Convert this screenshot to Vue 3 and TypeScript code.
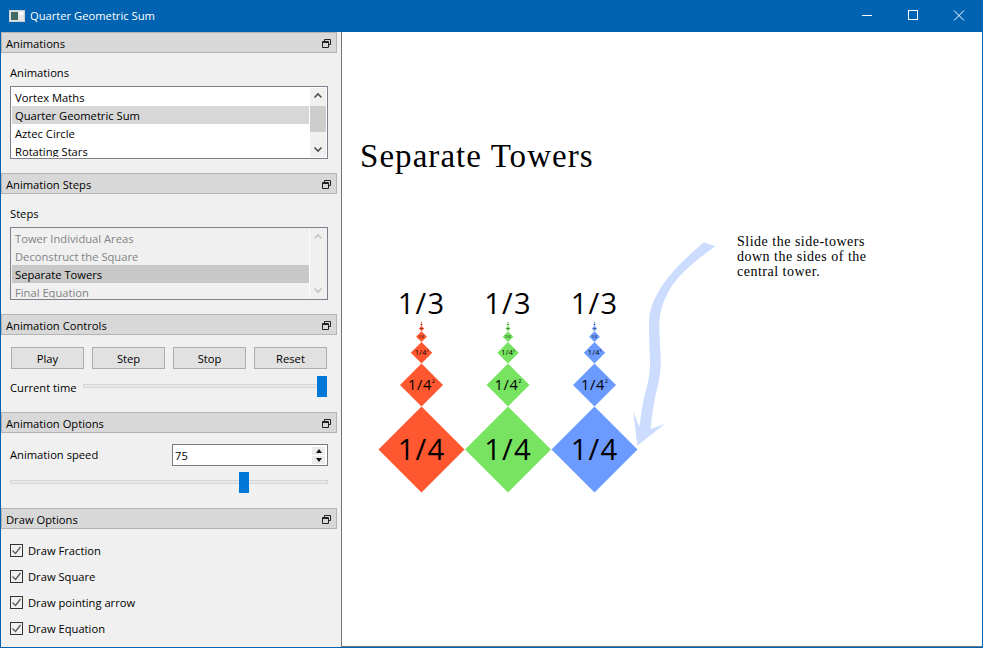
<template>
  <div class="window">
    <header class="titlebar">
      <svg class="app-icon" width="16" height="12" viewBox="0 0 16 12">
        <rect x="0.5" y="0.5" width="15" height="11" fill="#e6e6e6" stroke="#d0d0d0" />
        <rect x="2" y="2" width="7" height="8" fill="#3f6a68" />
        <rect x="10" y="2" width="4" height="3" fill="#fff" />
      </svg>
      <span class="title">Quarter Geometric Sum</span>
      <div class="win-controls">
        <svg width="46" height="31" viewBox="0 0 46 31"><path d="M18 15.5h10" stroke="#fff" fill="none" /></svg>
        <svg width="46" height="31" viewBox="0 0 46 31"><rect x="18.5" y="10.5" width="9" height="9" stroke="#fff" fill="none" /></svg>
        <svg width="46" height="31" viewBox="0 0 46 31"><path d="M18 10.5l10 10M28 10.5l-10 10" stroke="#fff" fill="none" /></svg>
      </div>
    </header>

    <main class="main">
      <aside class="sidebar">
        <section class="dock">
          <h2 class="dock-head">Animations<svg class="float" width="9" height="9" viewBox="0 0 9 9"><path d="M2.5 2.5v-2h6v5h-2M.5 2.5h6v6h-6zM.5 3.5h6" fill="none" stroke="#222" /></svg></h2>
          <div class="dock-body body-animations">
            <div class="label">Animations</div>
            <div class="list">
              <ul class="rows">
                <li v-for="a in animations" :key="a" class="row" :class="{ selected: a === 'Quarter Geometric Sum' }">{{ a }}</li>
              </ul>
              <div class="scrollbar">
                <svg width="16" height="16" viewBox="0 0 16 16"><path d="M4.5 9.5L8 6l3.5 3.5" fill="none" stroke="#505050" stroke-width="1.6" /></svg>
                <div class="track"><div class="thumb"></div></div>
                <svg width="16" height="16" viewBox="0 0 16 16"><path d="M4.5 6.5L8 10l3.5-3.5" fill="none" stroke="#505050" stroke-width="1.6" /></svg>
              </div>
            </div>
          </div>
        </section>

        <section class="dock">
          <h2 class="dock-head">Animation Steps<svg class="float" width="9" height="9" viewBox="0 0 9 9"><path d="M2.5 2.5v-2h6v5h-2M.5 2.5h6v6h-6zM.5 3.5h6" fill="none" stroke="#222" /></svg></h2>
          <div class="dock-body body-steps">
            <div class="label">Steps</div>
            <div class="list disabled">
              <ul class="rows">
                <li v-for="s in steps" :key="s" class="row" :class="{ selected: s === 'Separate Towers' }">{{ s }}</li>
              </ul>
              <div class="scrollbar">
                <svg width="16" height="16" viewBox="0 0 16 16"><path d="M4.5 9.5L8 6l3.5 3.5" fill="none" stroke="#c4c4c4" stroke-width="1.6" /></svg>
                <div class="track"></div>
                <svg width="16" height="16" viewBox="0 0 16 16"><path d="M4.5 6.5L8 10l3.5-3.5" fill="none" stroke="#c4c4c4" stroke-width="1.6" /></svg>
              </div>
            </div>
          </div>
        </section>

        <section class="dock">
          <h2 class="dock-head">Animation Controls<svg class="float" width="9" height="9" viewBox="0 0 9 9"><path d="M2.5 2.5v-2h6v5h-2M.5 2.5h6v6h-6zM.5 3.5h6" fill="none" stroke="#222" /></svg></h2>
          <div class="dock-body body-controls">
            <div class="buttons">
              <button v-for="b in buttons" :key="b" class="btn">{{ b }}</button>
            </div>
            <div class="time-row">
              <span class="label time-label">Current time</span>
              <div class="slider time-slider"><div class="handle" :style="{ left: '233px' }"></div></div>
            </div>
          </div>
        </section>

        <section class="dock">
          <h2 class="dock-head">Animation Options<svg class="float" width="9" height="9" viewBox="0 0 9 9"><path d="M2.5 2.5v-2h6v5h-2M.5 2.5h6v6h-6zM.5 3.5h6" fill="none" stroke="#222" /></svg></h2>
          <div class="dock-body body-options">
            <div class="speed-row">
              <span class="label">Animation speed</span>
              <div class="spin">
                <span class="spin-value">75</span>
                <div class="spin-btns">
                  <div class="spin-btn"><i class="tri up"></i></div>
                  <div class="spin-btn"><i class="tri down"></i></div>
                </div>
              </div>
            </div>
            <div class="slider speed-slider"><div class="handle" :style="{ left: '228px' }"></div></div>
          </div>
        </section>

        <section class="dock">
          <h2 class="dock-head">Draw Options<svg class="float" width="9" height="9" viewBox="0 0 9 9"><path d="M2.5 2.5v-2h6v5h-2M.5 2.5h6v6h-6zM.5 3.5h6" fill="none" stroke="#222" /></svg></h2>
          <div class="dock-body body-draw">
            <label v-for="c in checks" :key="c" class="check">
              <svg width="13" height="13" viewBox="0 0 13 13">
                <rect x="0.5" y="0.5" width="12" height="12" fill="#f0f0f0" stroke="#333" />
                <path d="M2.5 6.5l3 3 5-6.5" fill="none" stroke="#5a5a5a" stroke-width="1.3" />
              </svg>
              <span>{{ c }}</span>
            </label>
          </div>
        </section>
      </aside>

      <div class="canvas">
        <svg class="scene" width="640" height="616" viewBox="342 32 640 616">
          <text x="360" y="167" class="scene-title">Separate Towers</text>

          <path
            class="arrow"
            d="M704 242.3L715.3 246.3C690 264 675 279 668.3 292C662 304 659.3 314 659.3 325C659.3 340 661 352 660.7 365C660.5 378 657 388 655 398C653 408 651.5 418 650.7 429L665 423.7L637.3 445.7L633.3 411.7L639.3 427C640.5 418 642 408 644 398C647 386 650 376 650 365C650 352 649 340 649 325C649 312 652 303 658.3 292C667 276 685 258 704 242.3Z"
          />
          <text class="note"><tspan x="737" y="246">Slide the side-towers</tspan><tspan x="737" y="261">down the sides of the</tspan><tspan x="737" y="276">central tower.</tspan></text>

          <g v-for="t in towers" :key="t.color">
            <text :x="t.x" y="314" class="frac top">1/3</text>
            <g v-for="(d, i) in levels" :key="i">
              <polygon
                :points="`${t.x},${d.y - d.half} ${t.x + d.half},${d.y} ${t.x},${d.y + d.half} ${t.x - d.half},${d.y}`"
                :fill="t.color"
              />
              <text v-if="i < 4" :x="t.x" :y="d.y + d.half * 0.25" class="frac" :style="{ fontSize: d.half * 0.68 + 'px' }">1/4<tspan v-if="i > 0" class="sup" :dy="-d.half * 0.32">{{ i + 1 }}</tspan></text>
              <rect v-else :x="t.x - d.half * 0.4" :y="d.y - 0.4" :width="d.half * 0.8" height="0.8" fill="#3a3a3a" />
            </g>
          </g>
        </svg>
      </div>
    </main>
  </div>
</template>

<script setup lang="ts">
const animations = ['Vortex Maths', 'Quarter Geometric Sum', 'Aztec Circle', 'Rotating Stars'];
const steps = ['Tower Individual Areas', 'Deconstruct the Square', 'Separate Towers', 'Final Equation'];
const buttons = ['Play', 'Step', 'Stop', 'Reset'];
const checks = ['Draw Fraction', 'Draw Square', 'Draw pointing arrow', 'Draw Equation'];

const towers = [
  { x: 421.5, color: '#ff5730' },
  { x: 508, color: '#77e360' },
  { x: 594.5, color: '#6c9bff' }
];

// each level is half the size of the one below it
const levels: { y: number; half: number }[] = [];
let half = 43;
let y = 449.5;
for (let i = 0; i < 7; i++) {
  levels.push({ y, half });
  y -= half * 1.5;
  half /= 2;
}
</script>

<style>
html,
body {
  margin: 0;
  background: #0063b1;
}
</style>

<style scoped>
.window {
  width: 983px;
  height: 648px;
  box-sizing: border-box;
  display: flex;
  flex-direction: column;
  background: #0063b1;
  padding: 0 1px 1px;
  font-family: 'Open Sans', 'Noto Sans', sans-serif;
  font-size: 11.2px;
  color: #000;
  overflow: hidden;
}

.titlebar {
  height: 31px;
  flex: none;
  display: flex;
  align-items: center;
  color: #fff;
  margin-top: 1px;
  margin-bottom: -1px;
}

.app-icon {
  margin-left: 8px;
  margin-top: -2px;
}

.title {
  margin-left: 5px;
  margin-top: -2px;
}

.win-controls {
  margin-left: auto;
  display: flex;
  margin-top: -2px;
  margin-right: 0;
}

.main {
  flex: 1;
  display: flex;
  min-height: 0;
  margin-top: 1px;
}

.sidebar {
  width: 340px;
  flex: none;
  background: #f0f0f0;
  border-right: 1px solid #6e7680;
  box-sizing: content-box;
}

.dock-head {
  position: relative;
  margin: 0 4px 0 0;
  height: 21px;
  box-sizing: border-box;
  background: #d8d8d8;
  border: 1px solid #b4b4b4;
  font-size: 11.2px;
  font-weight: 400;
  line-height: 21px;
  padding-left: 4px;
}

.float {
  position: absolute;
  right: 5px;
  top: 6px;
}

.label {
  line-height: 18px;
}

.body-animations,
.body-steps {
  height: 120px;
  padding: 11px 9px 0;
  box-sizing: border-box;
}

.list {
  margin-top: 4px;
  margin-right: 4px;
  width: 318px;
  height: 73px;
  box-sizing: border-box;
  border: 1px solid #7f7f8c;
  background: #fff;
  display: flex;
  padding: 1px;
  overflow: hidden;
}

.list.disabled {
  background: #f0f0f0;
  color: #838383;
}

.rows {
  list-style: none;
  margin: 0;
  padding: 0;
  flex: 1;
  overflow: hidden;
}

.row {
  height: 18px;
  line-height: 20px;
  padding-left: 3px;
  overflow: hidden;
}

.row.selected {
  background: #d7d7d7;
  color: #000;
}

.disabled .row.selected {
  background: #c8c8c8;
}

.scrollbar {
  width: 16px;
  flex: none;
  margin-left: 1px;
  display: flex;
  flex-direction: column;
  background: #f0f0f0;
}

.disabled .scrollbar {
  border-left: 1px solid #fff;
  margin-left: 0;
}

.track {
  flex: 1;
}

.thumb {
  height: 26px;
  margin-top: 2px;
  background: #cdcdcd;
}

.body-controls {
  height: 77px;
  padding: 12px 10px 0;
  box-sizing: border-box;
}

.buttons {
  display: grid;
  grid-template-columns: repeat(4, 73px);
  gap: 8px;
}

.btn {
  height: 22px;
  padding: 0;
  background: #e1e1e1;
  border: 1px solid #adadad;
  font: inherit;
  color: #000;
}

.time-row {
  display: flex;
  align-items: center;
  margin-top: 8px;
  margin-left: -1px;
  height: 21px;
}

.time-label {
  flex: none;
  width: 73px;
  white-space: nowrap;
}

.slider {
  position: relative;
  height: 4px;
  box-sizing: border-box;
  background: #e7eaea;
  border: 1px solid #d6d6d6;
}

.time-slider {
  width: 244px;
  margin-top: -4px;
}

.handle {
  position: absolute;
  top: -9px;
  width: 10px;
  height: 21px;
  background: #0078d7;
}

.body-options {
  height: 75px;
  padding: 11px 9px 0;
  box-sizing: border-box;
}

.speed-row {
  display: flex;
  align-items: center;
  justify-content: space-between;
  width: 318px;
}

.spin {
  width: 156px;
  height: 22px;
  box-sizing: border-box;
  border: 1px solid #7a7a7a;
  background: #fff;
  display: flex;
  align-items: center;
  padding-left: 2px;
}

.spin-value {
  flex: 1;
}

.spin-btns {
  width: 13px;
  margin-right: 2px;
  display: flex;
  flex-direction: column;
  gap: 1px;
}

.spin-btn {
  height: 8px;
  background: #ececec;
  display: flex;
  align-items: center;
  justify-content: center;
}

.tri {
  width: 0;
  height: 0;
  border-left: 3.5px solid transparent;
  border-right: 3.5px solid transparent;
}

.tri.up {
  border-bottom: 4px solid #111;
}

.tri.down {
  border-top: 4px solid #111;
}

.speed-slider {
  width: 318px;
  margin-top: 14px;
}

.body-draw {
  padding: 12px 9px 0;
  display: flex;
  flex-direction: column;
  gap: 8px;
}

.check {
  display: flex;
  align-items: center;
  gap: 5px;
  height: 18px;
}

.canvas {
  flex: 1;
  position: relative;
  background: #fff;
  border-bottom: 1px solid #6e7680;
  overflow: hidden;
}

.scene {
  position: absolute;
  left: 0;
  top: 0;
}

.scene-title {
  font-family: 'Liberation Serif', serif;
  font-size: 33px;
  letter-spacing: 1.05px;
  fill: #000;
}

.note {
  font-family: 'Liberation Serif', serif;
  font-size: 14px;
  letter-spacing: 0.5px;
  fill: #000;
}

.arrow {
  fill: #ccdcff;
}

.frac {
  font-family: 'Open Sans', sans-serif;
  text-anchor: middle;
  fill: #000;
  letter-spacing: 0.04em;
}

.frac.top {
  font-size: 29px;
}

.sup {
  font-size: 38%;
  letter-spacing: 0;
}
</style>
